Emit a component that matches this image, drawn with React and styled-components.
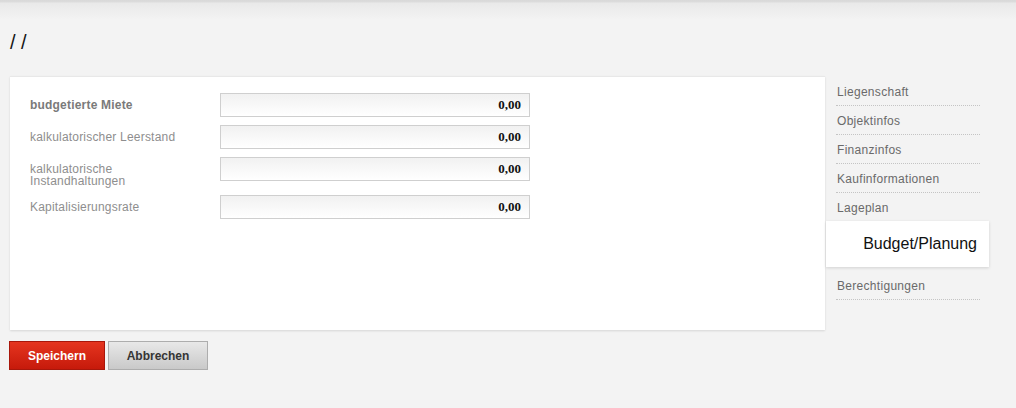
import React from 'react';
import styled, { createGlobalStyle } from 'styled-components';

const GlobalStyle = createGlobalStyle`
    body {
        margin: 0;
        background: #f3f3f3;
        font-family: "Liberation Sans", Arial, sans-serif;
    }
`

const Page = styled.div`
    width: 1016px;
    min-height: 408px;
    background: linear-gradient(#d9d9d9 0, #dcdcdc 2px, #e9e9e9 3px, #f3f3f3 20px, #f3f3f3 100%);
`

const Title = styled.h1`
    margin: 0;
    padding: 30px 0 0 10px;
    font-size: 20px;
    line-height: 24px;
    font-weight: normal;
    color: #151515;
`

const Main = styled.div`
    display: flex;
    align-items: flex-start;
    margin-top: 22px;
    padding-left: 10px;
`

const Panel = styled.div`
    width: 815px;
    height: 254px;
    box-sizing: border-box;
    background: #fff;
    border-top: 1px solid #e8e8e8;
    box-shadow: 0 1px 2px rgba(0, 0, 0, 0.12);
    padding: 16px 0 0 20px;
`

const Form = styled.div`
    display: grid;
    grid-template-columns: 190px 310px;
    row-gap: 8px;
`

const Label = styled.div`
    max-width: 170px;
    padding-top: 6px;
    font-size: 12px;
    line-height: 12px;
    letter-spacing: 0.2px;
    color: ${p => p.$strong ? '#7a7a7a' : '#8e8e8e'};
    font-weight: ${p => p.$strong ? 'bold' : 'normal'};
`

const Field = styled.div`
    height: 24px;
    box-sizing: border-box;
    border: 1px solid #cfcfcf;
    background: linear-gradient(#f1f1f1, #ffffff);
    display: flex;
    align-items: center;
    justify-content: flex-end;
    padding-right: 8px;
    font-family: "Liberation Serif", "Times New Roman", serif;
    font-weight: bold;
    font-size: 13px;
    color: #111;
`

const Side = styled.ul`
    list-style: none;
    margin: 1px 0 0 11px;
    padding: 0;
    width: 144px;
`

const SideItem = styled.li`
    padding: 8px 0 6px 1px;
    font-size: 12px;
    line-height: 14px;
    letter-spacing: 0.3px;
    color: #6a6a6a;
    border-bottom: 1px dotted #c4c4c4;
`

const ActiveItem = styled.li`
    margin: -1px -9px 4px -10px;
    height: 46px;
    box-sizing: border-box;
    background: #fff;
    box-shadow: 0 1px 3px rgba(0, 0, 0, 0.14);
    display: flex;
    align-items: center;
    justify-content: flex-end;
    padding-right: 12px;
    font-size: 16px;
    color: #111;
`

const Buttons = styled.div`
    display: flex;
    gap: 3px;
    margin: 11px 0 0 9px;
`

const Button = styled.button`
    height: 29px;
    box-sizing: border-box;
    padding: 0;
    width: ${p => p.$primary ? '96px' : '100px'};
    font-family: "Liberation Sans", Arial, sans-serif;
    font-size: 12px;
    font-weight: bold;
    border: 1px solid ${p => p.$primary ? '#a8170b' : '#adadad'};
    color: ${p => p.$primary ? '#fff' : '#353535'};
    background: ${p => p.$primary
        ? 'linear-gradient(#e5351f, #c61a0b)'
        : 'linear-gradient(#e8e8e8, #c9c9c9)'};
    cursor: pointer;
`

const rows = [
    { label: 'budgetierte Miete', strong: true },
    { label: 'kalkulatorischer Leerstand' },
    { label: 'kalkulatorische Instandhaltungen' },
    { label: 'Kapitalisierungsrate' },
];

const menu = ['Liegenschaft', 'Objektinfos', 'Finanzinfos', 'Kaufinformationen', 'Lageplan'];

export default function App() {
    return (
        <Page>
            <GlobalStyle />
            <Title>/ /</Title>
            <Main>
                <Panel>
                    <Form>
                        {rows.map(r => (
                            <React.Fragment key={r.label}>
                                <Label $strong={r.strong}>{r.label}</Label>
                                <Field>0,00</Field>
                            </React.Fragment>
                        ))}
                    </Form>
                </Panel>
                <Side>
                    {menu.map(m => <SideItem key={m}>{m}</SideItem>)}
                    <ActiveItem>Budget/Planung</ActiveItem>
                    <SideItem>Berechtigungen</SideItem>
                </Side>
            </Main>
            <Buttons>
                <Button $primary>Speichern</Button>
                <Button>Abbrechen</Button>
            </Buttons>
        </Page>
    );
}
